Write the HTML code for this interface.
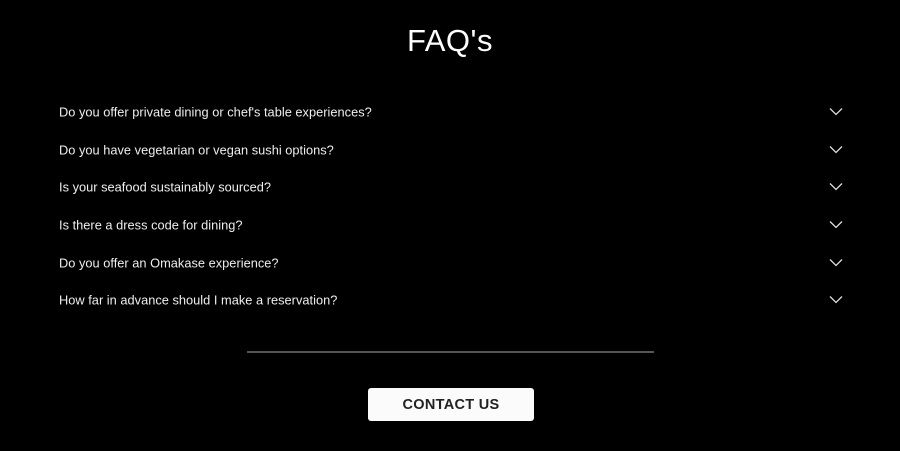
<!DOCTYPE html>
<html><head><style>
body{margin:0;width:900px;height:451px;background:#000;font-family:"Liberation Sans",sans-serif;position:relative;overflow:hidden;color:#fff}
h1{position:absolute;top:23px;left:0;width:900px;text-align:center;margin:0;font-weight:400;font-size:31px;letter-spacing:0.5px}
.q{position:absolute;left:59px;font-size:12.8px;letter-spacing:0.02px;color:#eee;transform:translateY(-50%);margin-top:1px}
.c{position:absolute;left:829px;width:14px;height:9px}
.line{position:absolute;left:247px;top:351px;width:407px;height:2px;background:#555}
.btn{position:absolute;left:368px;top:388px;width:166px;height:33px;background:#fbfbfb;border-radius:3px;color:#222;font-weight:700;font-size:14.5px;letter-spacing:0.3px;text-align:center;line-height:34px}
</style></head><body>
<h1>FAQ's</h1>
<div class="q" style="top:111px">Do you offer private dining or chef's table experiences?</div>
<div class="q" style="top:149px">Do you have vegetarian or vegan sushi options?</div>
<div class="q" style="top:186px">Is your seafood sustainably sourced?</div>
<div class="q" style="top:224px">Is there a dress code for dining?</div>
<div class="q" style="top:262px">Do you offer an Omakase experience?</div>
<div class="q" style="top:299px">How far in advance should I make a reservation?</div>
<svg class="c" style="top:107px" viewBox="0 0 14 9"><path d="M1 1.5L7 7.5L13 1.5" stroke="#ddd" stroke-width="1.3" fill="none"/></svg>
<svg class="c" style="top:145px" viewBox="0 0 14 9"><path d="M1 1.5L7 7.5L13 1.5" stroke="#ddd" stroke-width="1.3" fill="none"/></svg>
<svg class="c" style="top:182px" viewBox="0 0 14 9"><path d="M1 1.5L7 7.5L13 1.5" stroke="#ddd" stroke-width="1.3" fill="none"/></svg>
<svg class="c" style="top:220px" viewBox="0 0 14 9"><path d="M1 1.5L7 7.5L13 1.5" stroke="#ddd" stroke-width="1.3" fill="none"/></svg>
<svg class="c" style="top:258px" viewBox="0 0 14 9"><path d="M1 1.5L7 7.5L13 1.5" stroke="#ddd" stroke-width="1.3" fill="none"/></svg>
<svg class="c" style="top:295px" viewBox="0 0 14 9"><path d="M1 1.5L7 7.5L13 1.5" stroke="#ddd" stroke-width="1.3" fill="none"/></svg>
<div class="line"></div>
<div class="btn">CONTACT US</div>
</body></html>
